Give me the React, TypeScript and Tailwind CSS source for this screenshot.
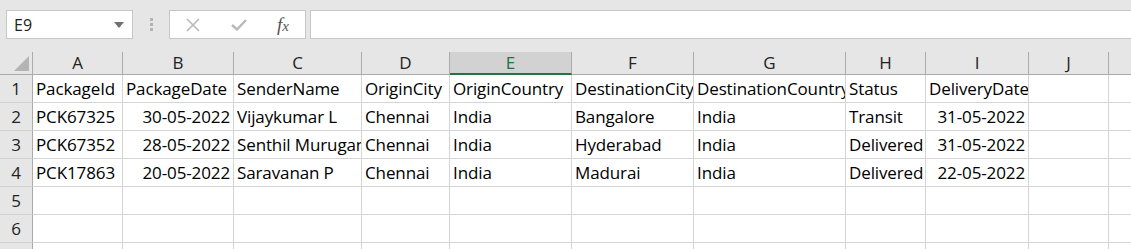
import React from "react";

const cols = [
  { l: "A", w: 90 },
  { l: "B", w: 111 },
  { l: "C", w: 128 },
  { l: "D", w: 88 },
  { l: "E", w: 122 },
  { l: "F", w: 122 },
  { l: "G", w: 152 },
  { l: "H", w: 80 },
  { l: "I", w: 103 },
  { l: "J", w: 80 },
  { l: "", w: 60 },
];

type Cell = { t: string; r?: boolean };
const rows: Cell[][] = [
  [
    { t: "PackageId" },
    { t: "PackageDate" },
    { t: "SenderName" },
    { t: "OriginCity" },
    { t: "OriginCountry" },
    { t: "DestinationCity" },
    { t: "DestinationCountry" },
    { t: "Status" },
    { t: "DeliveryDate" },
  ],
  [
    { t: "PCK67325" },
    { t: "30-05-2022", r: true },
    { t: "Vijaykumar L" },
    { t: "Chennai" },
    { t: "India" },
    { t: "Bangalore" },
    { t: "India" },
    { t: "Transit" },
    { t: "31-05-2022", r: true },
  ],
  [
    { t: "PCK67352" },
    { t: "28-05-2022", r: true },
    { t: "Senthil Murugan" },
    { t: "Chennai" },
    { t: "India" },
    { t: "Hyderabad" },
    { t: "India" },
    { t: "Delivered" },
    { t: "31-05-2022", r: true },
  ],
  [
    { t: "PCK17863" },
    { t: "20-05-2022", r: true },
    { t: "Saravanan P" },
    { t: "Chennai" },
    { t: "India" },
    { t: "Madurai" },
    { t: "India" },
    { t: "Delivered" },
    { t: "22-05-2022", r: true },
  ],
  [],
  [],
  [],
];

export default function App() {
  return (
    <div
      className="w-[1131px] h-[249px] overflow-hidden bg-[#e6e6e6] text-black"
      style={{ fontFamily: '"Open Sans", "Noto Sans", sans-serif' }}
    >
      {/* toolbar */}
      <div className="h-[52px] pt-[10px] flex items-start">
        <div className="ml-[6px] w-[127px] h-[29px] bg-white border border-[#c6c6c6] flex items-center justify-between pl-[7px] pr-[8px]">
          <span className="text-[16px] text-[#222]">E9</span>
          <svg width="10" height="6" viewBox="0 0 10 6">
            <path d="M0 0 H10 L5 6 Z" fill="#707070" />
          </svg>
        </div>
        <div className="ml-[17px] mt-[8px] flex flex-col gap-[2px]">
          <div className="w-[3px] h-[3px] bg-[#b3b3b3]" />
          <div className="w-[3px] h-[3px] bg-[#b3b3b3]" />
          <div className="w-[3px] h-[3px] bg-[#b3b3b3]" />
        </div>
        <div className="ml-[16px] w-[137px] h-[29px] bg-white border border-[#c6c6c6] flex items-center">
          <svg className="ml-[16px]" width="14" height="14" viewBox="0 0 14 14">
            <path d="M1 1 L13 13 M13 1 L1 13" stroke="#b9b9b9" strokeWidth="1.6" />
          </svg>
          <svg className="ml-[31px]" width="16" height="13" viewBox="0 0 16 13">
            <path d="M1 7 L6 11.5 L15 2" stroke="#b9b9b9" strokeWidth="2.4" fill="none" />
          </svg>
          <span
            className="ml-[30px] text-[19px] italic text-[#555] leading-none"
            style={{ fontFamily: '"Liberation Serif", serif' }}
          >
            f<span className="text-[15px]">x</span>
          </span>
        </div>
        <div className="ml-[4px] flex-1 h-[29px] bg-white border border-[#c6c6c6] border-r-0" />
      </div>

      {/* grid */}
      <div className="bg-white">
        {/* header row */}
        <div className="flex h-[23px] bg-[#e6e6e6]">
          <div className="w-[33px] shrink-0 h-full border-r border-b border-[#ababab] relative">
            <svg className="absolute right-[3px] bottom-[3px]" width="15" height="15" viewBox="0 0 15 15">
              <path d="M15 0 V15 H0 Z" fill="#b4b4b4" />
            </svg>
          </div>
          {cols.map((c, i) =>
            c.l === "E" ? (
              <div
                key={i}
                style={{ width: c.w }}
                className="shrink-0 h-full bg-[#d2d2d2] border-r border-[#ababab] border-b-2 border-b-[#217346] flex items-center justify-center text-[17px] text-[#217346]"
              >
                {c.l}
              </div>
            ) : (
              <div
                key={i}
                style={{ width: c.w }}
                className="shrink-0 h-full border-r border-b border-[#ababab] flex items-center justify-center text-[17px] text-[#222]"
              >
                {c.l}
              </div>
            )
          )}
        </div>
        {rows.map((row, ri) => (
          <div key={ri} className="flex h-[28px]">
            <div className="w-[33px] shrink-0 h-full bg-[#e6e6e6] border-r border-r-[#ababab] border-b border-b-[#d0d0d0] flex items-center justify-center text-[17px] text-[#222]">
              {ri + 1}
            </div>
            {cols.map((c, ci) => {
              const cell = row[ci];
              return (
                <div
                  key={ci}
                  style={{ width: c.w }}
                  className={
                    "shrink-0 h-full border-r border-b border-[#d4d4d4] overflow-hidden whitespace-nowrap flex items-center text-[17px] tracking-[-0.12px] " +
                    (cell && cell.r ? "justify-end pr-[3px]" : "pl-[3px]")
                  }
                >
                  {cell ? cell.t : ""}
                </div>
              );
            })}
          </div>
        ))}
      </div>
    </div>
  );
}
